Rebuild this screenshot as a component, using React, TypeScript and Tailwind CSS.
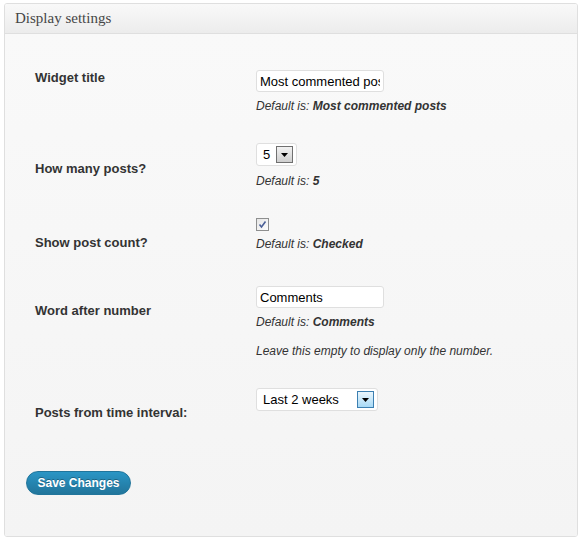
import React from "react";

function ArrowBox({ active }: { active?: boolean }) {
  return (
    <span
      className={`flex items-center justify-center w-[17px] h-[17px] border ${
        active
          ? "border-[#3c7fb1] bg-gradient-to-b from-[#eaf6fd] to-[#a7d9f5]"
          : "border-[#707070] bg-gradient-to-b from-[#f2f2f2] to-[#cfcfcf]"
      }`}
    >
      <svg width="7" height="4" viewBox="0 0 7 4">
        <path d="M0 0h7L3.5 4z" fill="#000" />
      </svg>
    </span>
  );
}

function Hint({ label, value }: { label: string; value?: string }) {
  return (
    <p className="text-[12px] leading-[15px] italic text-[#333]">
      {label}
      {value && <b> {value}</b>}
    </p>
  );
}

export default function App() {
  return (
    <div className="w-[584px] h-[543px] bg-white pt-[3px] pl-[4px] font-['Liberation_Sans',Arial,sans-serif]">
      <div className="w-[574px] h-[534px] border border-[#dfdfdf] rounded-[3px] flex flex-col overflow-hidden">
        <div className="h-[30px] shrink-0 flex items-center pl-[10px] bg-gradient-to-b from-[#f9f9f9] to-[#ececec] border-b border-[#dfdfdf]">
          <h3 className="text-[15px] text-[#464646] font-['Liberation_Serif',Georgia,serif]">Display settings</h3>
        </div>

        <div className="flex-1 bg-gradient-to-b from-[#f9f9f9] to-[#f4f4f4] pl-[30px] pt-[36px] text-[#333]">
          {/* Widget title */}
          <div className="flex">
            <div className="w-[221px] text-[13px] leading-[16px] font-bold">Widget title</div>
            <div className="flex flex-col">
              <input
                type="text"
                defaultValue="Most commented posts"
                className="w-[128px] h-[22px] px-[3px] text-[13px] text-black bg-white border border-[#dfdfdf] rounded-[3px] outline-none"
              />
              <div className="mt-[7px]">
                <Hint label="Default is:" value="Most commented posts" />
              </div>
            </div>
          </div>

          {/* How many posts */}
          <div className="flex mt-[29px]">
            <div className="w-[221px] pt-[18px] text-[13px] leading-[16px] font-bold">How many posts?</div>
            <div className="flex flex-col">
              <div className="w-[41px] h-[23px] flex items-center justify-between pl-[6px] pr-[3px] bg-white border border-[#dfdfdf] rounded-[3px]">
                <span className="text-[13px] text-black">5</span>
                <ArrowBox />
              </div>
              <div className="mt-[8px]">
                <Hint label="Default is:" value="5" />
              </div>
            </div>
          </div>

          {/* Show post count */}
          <div className="flex mt-[29px]">
            <div className="w-[221px] pt-[17px] text-[13px] leading-[16px] font-bold">Show post count?</div>
            <div className="flex flex-col">
              <span className="w-[13px] h-[13px] border border-[#8e8f8f] bg-gradient-to-br from-[#e6e6e6] to-[#fdfdfd] flex items-center justify-center">
                <svg width="9" height="9" viewBox="0 0 9 9">
                  <path d="M1.5 4.5L3.5 7L7.5 1.5" stroke="#4a5f97" strokeWidth="1.6" fill="none" />
                </svg>
              </span>
              <div className="mt-[6px]">
                <Hint label="Default is:" value="Checked" />
              </div>
            </div>
          </div>

          {/* Word after number */}
          <div className="flex mt-[34px]">
            <div className="w-[221px] pt-[17px] text-[13px] leading-[16px] font-bold">Word after number</div>
            <div className="flex flex-col">
              <input
                type="text"
                defaultValue="Comments"
                className="w-[128px] h-[22px] px-[3px] text-[13px] text-black bg-white border border-[#dfdfdf] rounded-[3px] outline-none"
              />
              <div className="mt-[7px]">
                <Hint label="Default is:" value="Comments" />
              </div>
              <div className="mt-[14px]">
                <Hint label="Leave this empty to display only the number." />
              </div>
            </div>
          </div>

          {/* Posts from time interval */}
          <div className="flex mt-[29px]">
            <div className="w-[221px] pt-[17px] text-[13px] leading-[16px] font-bold">Posts from time interval:</div>
            <div className="w-[122px] h-[23px] flex items-center justify-between pl-[6px] pr-[3px] bg-white border border-[#dfdfdf] rounded-[3px]">
              <span className="text-[13px] text-black">Last 2 weeks</span>
              <ArrowBox active />
            </div>
          </div>

          <button className="mt-[50px] -ml-[9px] h-[24px] w-[105px] rounded-full border border-[#21759b] bg-gradient-to-b from-[#2a95c5] to-[#21759b] text-white text-[12px] font-bold [text-shadow:0_-1px_0_rgba(0,0,0,0.3)]">
            Save Changes
          </button>
        </div>
      </div>
    </div>
  );
}
